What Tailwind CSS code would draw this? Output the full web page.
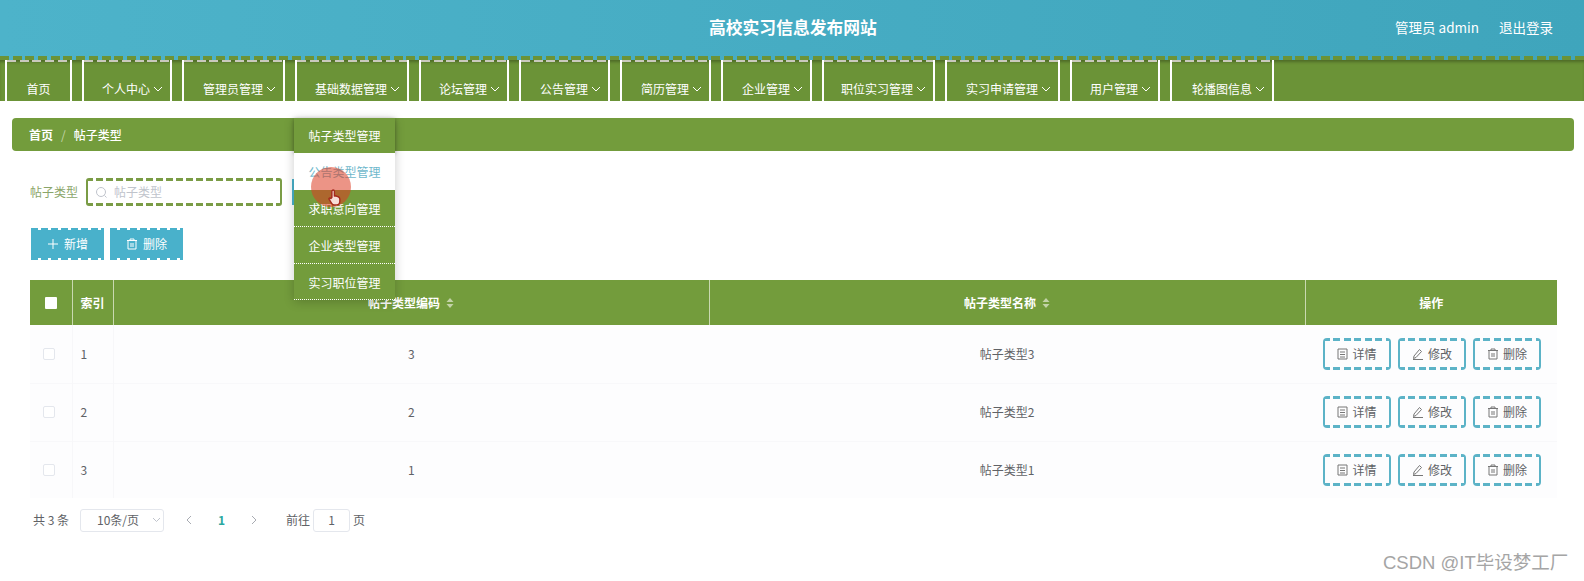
<!DOCTYPE html>
<html lang="zh">
<head>
<meta charset="utf-8">
<script src="https://cdn.jsdelivr.net/npm/@tailwindcss/browser@4"></script>
<title>高校实习信息发布网站</title>
</head>
<body class="bg-white">
<div class="relative h-[581px] w-[1584px] overflow-hidden bg-white font-['Noto_Sans_CJK_SC','Noto_Sans',sans-serif] text-[12px] text-[#606266]">

  <!-- header -->
  <header class="relative flex h-[60px] items-center bg-gradient-to-r from-[#4db3ca] to-[#3fa5bc] pb-[6px]">
    <h1 class="absolute left-[709px] top-[15px] text-[16.8px] leading-[24px] font-bold text-white">高校实习信息发布网站</h1>
    <div class="ml-auto flex gap-[20px] pr-[31px] text-[13.5px] text-white">
      <span>管理员 admin</span><span>退出登录</span>
    </div>
    <div class="absolute bottom-0 left-0 h-[4px] w-full bg-[repeating-linear-gradient(90deg,#6b9337_0_9px,transparent_9px_12.7px)]"></div>
  </header>

  <!-- nav -->
  <nav class="flex h-[41px] gap-[10px] bg-[#6b9337] pl-[5px] text-white shadow-[inset_0_3px_3px_-1px_rgba(60,80,30,.6)]">
    <a class="flex w-[67px] flex-col border-x-2 border-white"><i class="block h-[2px] bg-[repeating-linear-gradient(90deg,#c9c9bc_0_9px,transparent_9px_12.7px)]"></i><span class="flex h-[39px] items-center justify-center pt-[14px]">首页</span></a>
    <a class="flex w-[90px] flex-col border-x-2 border-white"><i class="block h-[2px] bg-[repeating-linear-gradient(90deg,#c9c9bc_0_9px,transparent_9px_12.7px)]"></i><span class="flex h-[39px] items-center justify-end gap-[3px] pt-[14px] pr-[7px]">个人中心<svg width="10" height="6" viewBox="0 0 10 6" fill="none" stroke="#fff" stroke-width="1"><path d="M1 1l4 4 4-4"/></svg></span></a>
    <a class="flex w-[103px] flex-col border-x-2 border-white"><i class="block h-[2px] bg-[repeating-linear-gradient(90deg,#c9c9bc_0_9px,transparent_9px_12.7px)]"></i><span class="flex h-[39px] items-center justify-end gap-[3px] pt-[14px] pr-[7px]">管理员管理<svg width="10" height="6" viewBox="0 0 10 6" fill="none" stroke="#fff" stroke-width="1"><path d="M1 1l4 4 4-4"/></svg></span></a>
    <a class="flex w-[114px] flex-col border-x-2 border-white"><i class="block h-[2px] bg-[repeating-linear-gradient(90deg,#c9c9bc_0_9px,transparent_9px_12.7px)]"></i><span class="flex h-[39px] items-center justify-end gap-[3px] pt-[14px] pr-[7px]">基础数据管理<svg width="10" height="6" viewBox="0 0 10 6" fill="none" stroke="#fff" stroke-width="1"><path d="M1 1l4 4 4-4"/></svg></span></a>
    <a class="flex w-[90px] flex-col border-x-2 border-white"><i class="block h-[2px] bg-[repeating-linear-gradient(90deg,#c9c9bc_0_9px,transparent_9px_12.7px)]"></i><span class="flex h-[39px] items-center justify-end gap-[3px] pt-[14px] pr-[7px]">论坛管理<svg width="10" height="6" viewBox="0 0 10 6" fill="none" stroke="#fff" stroke-width="1"><path d="M1 1l4 4 4-4"/></svg></span></a>
    <a class="flex w-[91px] flex-col border-x-2 border-white"><i class="block h-[2px] bg-[repeating-linear-gradient(90deg,#c9c9bc_0_9px,transparent_9px_12.7px)]"></i><span class="flex h-[39px] items-center justify-end gap-[3px] pt-[14px] pr-[7px]">公告管理<svg width="10" height="6" viewBox="0 0 10 6" fill="none" stroke="#fff" stroke-width="1"><path d="M1 1l4 4 4-4"/></svg></span></a>
    <a class="flex w-[91px] flex-col border-x-2 border-white"><i class="block h-[2px] bg-[repeating-linear-gradient(90deg,#c9c9bc_0_9px,transparent_9px_12.7px)]"></i><span class="flex h-[39px] items-center justify-end gap-[3px] pt-[14px] pr-[7px]">简历管理<svg width="10" height="6" viewBox="0 0 10 6" fill="none" stroke="#fff" stroke-width="1"><path d="M1 1l4 4 4-4"/></svg></span></a>
    <a class="flex w-[91px] flex-col border-x-2 border-white"><i class="block h-[2px] bg-[repeating-linear-gradient(90deg,#c9c9bc_0_9px,transparent_9px_12.7px)]"></i><span class="flex h-[39px] items-center justify-end gap-[3px] pt-[14px] pr-[7px]">企业管理<svg width="10" height="6" viewBox="0 0 10 6" fill="none" stroke="#fff" stroke-width="1"><path d="M1 1l4 4 4-4"/></svg></span></a>
    <a class="flex w-[113px] flex-col border-x-2 border-white"><i class="block h-[2px] bg-[repeating-linear-gradient(90deg,#c9c9bc_0_9px,transparent_9px_12.7px)]"></i><span class="flex h-[39px] items-center justify-end gap-[3px] pt-[14px] pr-[7px]">职位实习管理<svg width="10" height="6" viewBox="0 0 10 6" fill="none" stroke="#fff" stroke-width="1"><path d="M1 1l4 4 4-4"/></svg></span></a>
    <a class="flex w-[115px] flex-col border-x-2 border-white"><i class="block h-[2px] bg-[repeating-linear-gradient(90deg,#c9c9bc_0_9px,transparent_9px_12.7px)]"></i><span class="flex h-[39px] items-center justify-end gap-[3px] pt-[14px] pr-[7px]">实习申请管理<svg width="10" height="6" viewBox="0 0 10 6" fill="none" stroke="#fff" stroke-width="1"><path d="M1 1l4 4 4-4"/></svg></span></a>
    <a class="flex w-[90px] flex-col border-x-2 border-white"><i class="block h-[2px] bg-[repeating-linear-gradient(90deg,#c9c9bc_0_9px,transparent_9px_12.7px)]"></i><span class="flex h-[39px] items-center justify-end gap-[3px] pt-[14px] pr-[7px]">用户管理<svg width="10" height="6" viewBox="0 0 10 6" fill="none" stroke="#fff" stroke-width="1"><path d="M1 1l4 4 4-4"/></svg></span></a>
    <a class="flex w-[104px] flex-col border-x-2 border-white"><i class="block h-[2px] bg-[repeating-linear-gradient(90deg,#c9c9bc_0_9px,transparent_9px_12.7px)]"></i><span class="flex h-[39px] items-center justify-end gap-[3px] pt-[14px] pr-[7px]">轮播图信息<svg width="10" height="6" viewBox="0 0 10 6" fill="none" stroke="#fff" stroke-width="1"><path d="M1 1l4 4 4-4"/></svg></span></a>
  </nav>

  <!-- breadcrumb -->
  <div class="mx-[12px] mt-[17px] flex h-[33px] w-[1562px] items-center rounded-[4px] bg-[#739c3c] pl-[17px] text-white">
    <span class="font-bold">首页</span><span class="mx-[8px] text-[#c3d6a8]">/</span><span class="font-medium">帖子类型</span>
  </div>

  <main class="px-[30px]">
    <!-- search form -->
    <div class="mt-[27px] flex h-[28px] items-center">
      <span class="w-[56px] text-[#8aa56a]">帖子类型</span>
      <div class="flex h-[28px] w-[196px] items-center gap-[6px] rounded-[3px] bg-white pl-[9px] [background:repeating-linear-gradient(90deg,#7a9c45_0_7px,transparent_7px_10px)_0_0/100%_3px_no-repeat,repeating-linear-gradient(90deg,#7a9c45_0_7px,transparent_7px_10px)_0_100%/100%_3px_no-repeat,linear-gradient(#7a9c45,#7a9c45)_0_0/2px_100%_no-repeat,linear-gradient(#7a9c45,#7a9c45)_100%_0/2px_100%_no-repeat]">
        <svg width="13" height="13" viewBox="0 0 13 13" fill="none" stroke="#c0c4cc" stroke-width="1"><circle cx="6" cy="6" r="4.5"/><path d="M9.5 9.5l2 2"/></svg>
        <span class="text-[#c0c4cc]">帖子类型</span>
      </div>
      <div class="ml-[10px] h-[26px] w-[2px] bg-[#49b1cb]"></div>
    </div>

    <!-- action buttons -->
    <div class="mt-[22px] ml-[1px] flex gap-[6px] text-white">
      <button class="flex h-[32px] w-[73px] flex-col">
        <i class="block h-[2px] w-full bg-[repeating-linear-gradient(90deg,#49b1cb_0_7px,transparent_7px_10px)]"></i>
        <span class="flex h-[28px] w-full items-center justify-center gap-[5px] bg-[#49b1cb]"><svg width="12" height="12" viewBox="0 0 12 12" fill="none" stroke="#fff" stroke-width="1"><path d="M6 1v10M1 6h10"/></svg>新增</span>
        <i class="block h-[2px] w-full bg-[repeating-linear-gradient(90deg,#49b1cb_0_7px,transparent_7px_10px)]"></i>
      </button>
      <button class="flex h-[32px] w-[73px] flex-col">
        <i class="block h-[2px] w-full bg-[repeating-linear-gradient(90deg,#49b1cb_0_7px,transparent_7px_10px)]"></i>
        <span class="flex h-[28px] w-full items-center justify-center gap-[5px] bg-[#49b1cb]"><svg width="12" height="12" viewBox="0 0 12 12" fill="none" stroke="#fff" stroke-width="1"><path d="M1 2.500h10M4 2.500V1h4v1.500M2 2.500v8.500h8V2.500M5 5v4M7 5v4"/></svg>删除</span>
        <i class="block h-[2px] w-full bg-[repeating-linear-gradient(90deg,#49b1cb_0_7px,transparent_7px_10px)]"></i>
      </button>
    </div>

    <!-- table -->
    <table class="mt-[20px] w-[1527px] table-fixed border-collapse">
      <colgroup><col class="w-[42px]"><col class="w-[41px]"><col class="w-[596px]"><col class="w-[596px]"><col class="w-[252px]"></colgroup>
      <thead>
        <tr class="h-[45px] bg-[#739c3c] font-bold text-white">
          <th class="border-r border-[#c9d9b0]"><span class="ml-[3px] block h-[12px] w-[12px] translate-x-[12px] rounded-[1px] bg-white"></span></th>
          <th class="border-r border-[#c9d9b0] pl-[8px] text-left">索引</th>
          <th class="border-r border-[#c9d9b0]"><span class="inline-flex items-center gap-[6px]">帖子类型编码<svg width="8" height="10" viewBox="0 0 8 10" fill="#c3d3a8"><path d="M4 0l3.500 4h-7zM4 10L.5 6h7z"/></svg></span></th>
          <th class="border-r border-[#c9d9b0]"><span class="inline-flex items-center gap-[6px]">帖子类型名称<svg width="8" height="10" viewBox="0 0 8 10" fill="#c3d3a8"><path d="M4 0l3.500 4h-7zM4 10L.5 6h7z"/></svg></span></th>
          <th>操作</th>
        </tr>
      </thead>
      <tbody class="bg-[#fdfdfe]">
        <tr class="h-[58px] border-b border-[#f8f8fa]">
          <td class="border-r border-[#f7f7f9]"><span class="ml-[13px] block h-[12px] w-[12px] rounded-[2px] border border-[#e4e7ed] bg-white"></span></td>
          <td class="border-r border-[#f7f7f9] pl-[8px]">1</td>
          <td class="text-center">3</td>
          <td class="text-center">帖子类型3</td>
          <td><div class="flex justify-center gap-[7px] pl-[2px]">
            <button class="flex h-[32px] w-[68px] items-center justify-center gap-[4px] rounded-[4px] [background:repeating-linear-gradient(90deg,#5cb3c7_0_7px,transparent_7px_10.5px)_0_0/100%_3px_no-repeat,repeating-linear-gradient(90deg,#5cb3c7_0_7px,transparent_7px_10.5px)_0_100%/100%_3px_no-repeat,linear-gradient(#5cb3c7,#5cb3c7)_0_0/2px_100%_no-repeat,linear-gradient(#5cb3c7,#5cb3c7)_100%_0/2px_100%_no-repeat]"><svg width="11" height="12" viewBox="0 0 11 12" fill="none" stroke="#777" stroke-width="1"><path d="M1 1h9v10H1zM3 4h5M3 6.500h5M3 9h5"/></svg>详情</button>
            <button class="flex h-[32px] w-[68px] items-center justify-center gap-[4px] rounded-[4px] [background:repeating-linear-gradient(90deg,#5cb3c7_0_7px,transparent_7px_10.5px)_0_0/100%_3px_no-repeat,repeating-linear-gradient(90deg,#5cb3c7_0_7px,transparent_7px_10.5px)_0_100%/100%_3px_no-repeat,linear-gradient(#5cb3c7,#5cb3c7)_0_0/2px_100%_no-repeat,linear-gradient(#5cb3c7,#5cb3c7)_100%_0/2px_100%_no-repeat]"><svg width="12" height="12" viewBox="0 0 12 12" fill="none" stroke="#777" stroke-width="1"><path d="M7.500 1.500l2 2L4 9.500 1.500 10.500 2 8zM1 11.500h10"/></svg>修改</button>
            <button class="flex h-[32px] w-[68px] items-center justify-center gap-[4px] rounded-[4px] [background:repeating-linear-gradient(90deg,#5cb3c7_0_7px,transparent_7px_10.5px)_0_0/100%_3px_no-repeat,repeating-linear-gradient(90deg,#5cb3c7_0_7px,transparent_7px_10.5px)_0_100%/100%_3px_no-repeat,linear-gradient(#5cb3c7,#5cb3c7)_0_0/2px_100%_no-repeat,linear-gradient(#5cb3c7,#5cb3c7)_100%_0/2px_100%_no-repeat]"><svg width="12" height="12" viewBox="0 0 12 12" fill="none" stroke="#777" stroke-width="1"><path d="M1 2.500h10M4 2.500V1h4v1.500M2 2.500v8.500h8V2.500M5 5v4M7 5v4"/></svg>删除</button>
          </div></td>
        </tr>
        <tr class="h-[58px] border-b border-[#f8f8fa]">
          <td class="border-r border-[#f7f7f9]"><span class="ml-[13px] block h-[12px] w-[12px] rounded-[2px] border border-[#e4e7ed] bg-white"></span></td>
          <td class="border-r border-[#f7f7f9] pl-[8px]">2</td>
          <td class="text-center">2</td>
          <td class="text-center">帖子类型2</td>
          <td><div class="flex justify-center gap-[7px] pl-[2px]">
            <button class="flex h-[32px] w-[68px] items-center justify-center gap-[4px] rounded-[4px] [background:repeating-linear-gradient(90deg,#5cb3c7_0_7px,transparent_7px_10.5px)_0_0/100%_3px_no-repeat,repeating-linear-gradient(90deg,#5cb3c7_0_7px,transparent_7px_10.5px)_0_100%/100%_3px_no-repeat,linear-gradient(#5cb3c7,#5cb3c7)_0_0/2px_100%_no-repeat,linear-gradient(#5cb3c7,#5cb3c7)_100%_0/2px_100%_no-repeat]"><svg width="11" height="12" viewBox="0 0 11 12" fill="none" stroke="#777" stroke-width="1"><path d="M1 1h9v10H1zM3 4h5M3 6.500h5M3 9h5"/></svg>详情</button>
            <button class="flex h-[32px] w-[68px] items-center justify-center gap-[4px] rounded-[4px] [background:repeating-linear-gradient(90deg,#5cb3c7_0_7px,transparent_7px_10.5px)_0_0/100%_3px_no-repeat,repeating-linear-gradient(90deg,#5cb3c7_0_7px,transparent_7px_10.5px)_0_100%/100%_3px_no-repeat,linear-gradient(#5cb3c7,#5cb3c7)_0_0/2px_100%_no-repeat,linear-gradient(#5cb3c7,#5cb3c7)_100%_0/2px_100%_no-repeat]"><svg width="12" height="12" viewBox="0 0 12 12" fill="none" stroke="#777" stroke-width="1"><path d="M7.500 1.500l2 2L4 9.500 1.500 10.500 2 8zM1 11.500h10"/></svg>修改</button>
            <button class="flex h-[32px] w-[68px] items-center justify-center gap-[4px] rounded-[4px] [background:repeating-linear-gradient(90deg,#5cb3c7_0_7px,transparent_7px_10.5px)_0_0/100%_3px_no-repeat,repeating-linear-gradient(90deg,#5cb3c7_0_7px,transparent_7px_10.5px)_0_100%/100%_3px_no-repeat,linear-gradient(#5cb3c7,#5cb3c7)_0_0/2px_100%_no-repeat,linear-gradient(#5cb3c7,#5cb3c7)_100%_0/2px_100%_no-repeat]"><svg width="12" height="12" viewBox="0 0 12 12" fill="none" stroke="#777" stroke-width="1"><path d="M1 2.500h10M4 2.500V1h4v1.500M2 2.500v8.500h8V2.500M5 5v4M7 5v4"/></svg>删除</button>
          </div></td>
        </tr>
        <tr class="h-[57px]">
          <td class="border-r border-[#f7f7f9]"><span class="ml-[13px] block h-[12px] w-[12px] rounded-[2px] border border-[#e4e7ed] bg-white"></span></td>
          <td class="border-r border-[#f7f7f9] pl-[8px]">3</td>
          <td class="text-center">1</td>
          <td class="text-center">帖子类型1</td>
          <td><div class="flex justify-center gap-[7px] pl-[2px]">
            <button class="flex h-[32px] w-[68px] items-center justify-center gap-[4px] rounded-[4px] [background:repeating-linear-gradient(90deg,#5cb3c7_0_7px,transparent_7px_10.5px)_0_0/100%_3px_no-repeat,repeating-linear-gradient(90deg,#5cb3c7_0_7px,transparent_7px_10.5px)_0_100%/100%_3px_no-repeat,linear-gradient(#5cb3c7,#5cb3c7)_0_0/2px_100%_no-repeat,linear-gradient(#5cb3c7,#5cb3c7)_100%_0/2px_100%_no-repeat]"><svg width="11" height="12" viewBox="0 0 11 12" fill="none" stroke="#777" stroke-width="1"><path d="M1 1h9v10H1zM3 4h5M3 6.500h5M3 9h5"/></svg>详情</button>
            <button class="flex h-[32px] w-[68px] items-center justify-center gap-[4px] rounded-[4px] [background:repeating-linear-gradient(90deg,#5cb3c7_0_7px,transparent_7px_10.5px)_0_0/100%_3px_no-repeat,repeating-linear-gradient(90deg,#5cb3c7_0_7px,transparent_7px_10.5px)_0_100%/100%_3px_no-repeat,linear-gradient(#5cb3c7,#5cb3c7)_0_0/2px_100%_no-repeat,linear-gradient(#5cb3c7,#5cb3c7)_100%_0/2px_100%_no-repeat]"><svg width="12" height="12" viewBox="0 0 12 12" fill="none" stroke="#777" stroke-width="1"><path d="M7.500 1.500l2 2L4 9.500 1.500 10.500 2 8zM1 11.500h10"/></svg>修改</button>
            <button class="flex h-[32px] w-[68px] items-center justify-center gap-[4px] rounded-[4px] [background:repeating-linear-gradient(90deg,#5cb3c7_0_7px,transparent_7px_10.5px)_0_0/100%_3px_no-repeat,repeating-linear-gradient(90deg,#5cb3c7_0_7px,transparent_7px_10.5px)_0_100%/100%_3px_no-repeat,linear-gradient(#5cb3c7,#5cb3c7)_0_0/2px_100%_no-repeat,linear-gradient(#5cb3c7,#5cb3c7)_100%_0/2px_100%_no-repeat]"><svg width="12" height="12" viewBox="0 0 12 12" fill="none" stroke="#777" stroke-width="1"><path d="M1 2.500h10M4 2.500V1h4v1.500M2 2.500v8.500h8V2.500M5 5v4M7 5v4"/></svg>删除</button>
          </div></td>
        </tr>
      </tbody>
    </table>

    <!-- pagination -->
    <div class="mt-[10px] flex h-[24px] items-center pl-[3px]">
      <span class="w-[47px]">共 3 条</span>
      <div class="flex h-[23px] w-[84px] items-center rounded-[3px] border border-[#e4e7ed] pl-[16px]">10条/页<svg class="ml-[13px]" width="9" height="6" viewBox="0 0 9 6" fill="none" stroke="#c0c4cc"><path d="M1 1l3.500 3.500L8 1"/></svg></div>
      <svg class="ml-[22px]" width="6" height="10" viewBox="0 0 6 10" fill="none" stroke="#a8abb2"><path d="M5 1L1 5l4 4"/></svg>
      <span class="ml-[26px] font-bold text-[#2ba8a0]">1</span>
      <svg class="ml-[26px]" width="6" height="10" viewBox="0 0 6 10" fill="none" stroke="#a8abb2"><path d="M1 1l4 4-4 4"/></svg>
      <span class="ml-[29px]">前往</span>
      <span class="mx-[3px] flex h-[23px] w-[37px] items-center justify-center rounded-[3px] border border-[#e4e7ed]">1</span>
      <span>页</span>
    </div>
  </main>

  <!-- dropdown menu -->
  <ul class="absolute left-[294px] top-[118px] w-[101px] bg-white text-center text-white shadow-[0_2px_10px_rgba(0,0,0,.2)]">
    <li class="flex h-[35px] items-center justify-center bg-[#739c3c] pt-[1px] shadow-[0_1px_4px_rgba(0,0,0,.3)]">帖子类型管理</li>
    <li class="flex h-[37px] items-center justify-center bg-white pt-[1px] text-[#6fb8cc]">公告类型管理</li>
    <li class="flex h-[37px] items-center justify-center border-b border-dotted border-white bg-[#739c3c] pt-[2px]">求职意向管理</li>
    <li class="flex h-[37px] items-center justify-center border-b border-dotted border-white bg-[#739c3c] pt-[2px]">企业类型管理</li>
    <li class="flex h-[36px] items-center justify-center border-b border-dotted border-white bg-[#739c3c] pt-[2px]">实习职位管理</li>
  </ul>

  <!-- pointer highlight -->
  <div class="absolute left-[311px] top-[167px] h-[40px] w-[40px] rounded-full bg-[#dc3c23]/55"></div>
  <svg class="absolute left-[328px] top-[188px]" width="14" height="19" viewBox="0 0 18 22" fill="#f7ded8" stroke="#a5281c" stroke-width="1.800" stroke-linejoin="round"><path d="M5 11V3a1.600 1.600 0 0 1 3.200 0v6l1-.2 1.300.3 1.200.4 1.500.5c1.300.5 2 1.500 2 3v2.500c0 2.500-1.500 5-4 5H8c-1.500 0-2.500-.8-3.300-2L1.500 13.500c-.7-1.300 1-2.500 2.200-1.300z"/></svg>

  <!-- watermark -->
  <div class="absolute left-[1383px] top-[551px] font-['Liberation_Sans','Noto_Sans_CJK_SC',sans-serif] text-[18.5px] leading-[24px] text-[#a5a5a5]">CSDN @IT毕设梦工厂</div>
</div>
</body>
</html>
